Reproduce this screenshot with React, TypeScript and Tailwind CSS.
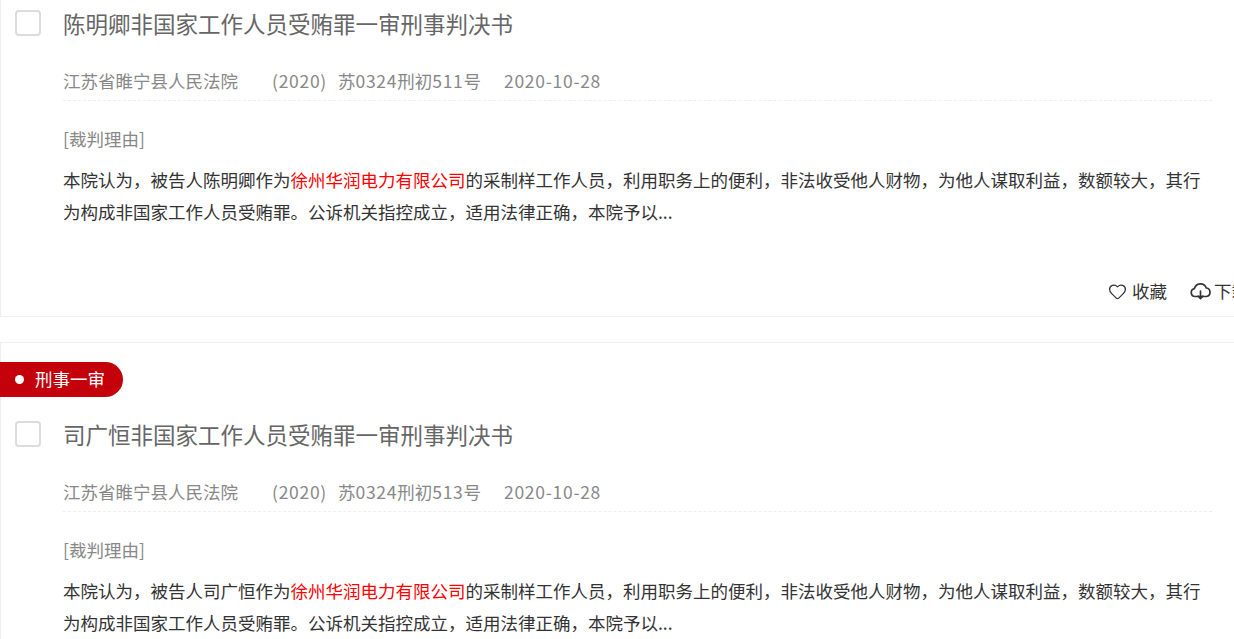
import { Heart } from 'lucide-react'

const cjk = "font-['Microsoft_YaHei','Noto_Sans_CJK_SC','Noto_Sans',sans-serif]"

function Hit() {
  return <span className="text-[#ff0000]">徐州华润电力有限公司</span>
}

function Num({ children }: { children: string }) {
  return <span className="tracking-[0.72px]">{children}</span>
}

function CloudIcon() {
  return (
    <svg width="21" height="19" viewBox="0 0 21 19" fill="none" stroke="currentColor" strokeWidth="1.7">
      <path d="M5.5 14.5H5a4 4 0 0 1-.6-7.9A6.2 6.2 0 0 1 16.3 6a4.3 4.3 0 0 1 .1 8.5h-.9H5.5z" strokeLinejoin="round" />
      <path d="M10.5 9v7.5M8.2 14.2l2.3 2.4 2.3-2.4" strokeLinecap="round" strokeLinejoin="round" />
    </svg>
  )
}

function CaseBody({
  title,
  name,
  caseNo,
}: {
  title: string
  name: string
  caseNo: string
}) {
  return (
    <div className="flex">
      <div className="w-[62px] shrink-0 pl-[14px] pt-[10px]">
        <div className="h-[26px] w-[26px] rounded-[4px] border-2 border-[#dcdcdc] bg-white" />
      </div>
      <div className="w-[1149px] shrink-0">
        <h3 className="h-[50px] text-[22.5px] leading-[46px] text-[#666]">{title}</h3>
        <div className="mt-[6px] flex h-[45px] items-center border-b border-dashed border-[#eee] pt-[7px] text-[17.5px] text-[#888]">
          <span className="w-[209px]">江苏省睢宁县人民法院</span>
          <span className="w-[232px]">
            <Num>(2020)</Num>
            <span className="ml-[11px]">苏</span>
            <Num>0324</Num>刑初<Num>{caseNo}</Num>号
          </span>
          <Num>2020-10-28</Num>
        </div>
        <p className="mt-[25px] text-[17.5px] leading-[26px] text-[#888]">[裁判理由]</p>
        <p className="mt-[11.5px] w-[1140px] text-[17.5px] leading-[32.5px] text-[#333]">
          本院认为，被告人{name}作为<Hit />的采制样工作人员，利用职务上的便利，非法收受他人财物，为他人谋取利益，数额较大，其行为构成非国家工作人员受贿罪。公诉机关指控成立，适用法律正确，本院予以...
        </p>
      </div>
    </div>
  )
}

export default function App() {
  return (
    <div className={`h-[639px] w-[1234px] overflow-hidden bg-white ${cjk}`}>
      <div className="h-[317px] w-[1300px] border-b border-l border-[#eee]">
        <CaseBody title="陈明卿非国家工作人员受贿罪一审刑事判决书" name="陈明卿" caseNo="511" />
        <div className="mt-[49.5px] flex items-center text-[17.5px] leading-[26px] text-[#333]">
          <span className="ml-[1107px] flex items-center gap-[5px]">
            <Heart size={19} strokeWidth={1.6} />
            收藏
          </span>
          <span className="ml-[23px] flex items-center gap-[3px] whitespace-nowrap">
            <CloudIcon />
            下载
          </span>
        </div>
      </div>
      <div className="mt-[25px] w-[1300px] border-l border-t border-[#eee]">
        <div className="mt-[19px] -ml-px flex h-[35px] w-[123px] items-center rounded-r-[18px] bg-[#c4000b] pl-[15px] text-[17.5px] text-white">
          <span className="h-[9px] w-[9px] rounded-full bg-white" />
          <span className="ml-[11px]">刑事一审</span>
        </div>
        <div className="mt-[14px]">
          <CaseBody title="司广恒非国家工作人员受贿罪一审刑事判决书" name="司广恒" caseNo="513" />
        </div>
      </div>
    </div>
  )
}
